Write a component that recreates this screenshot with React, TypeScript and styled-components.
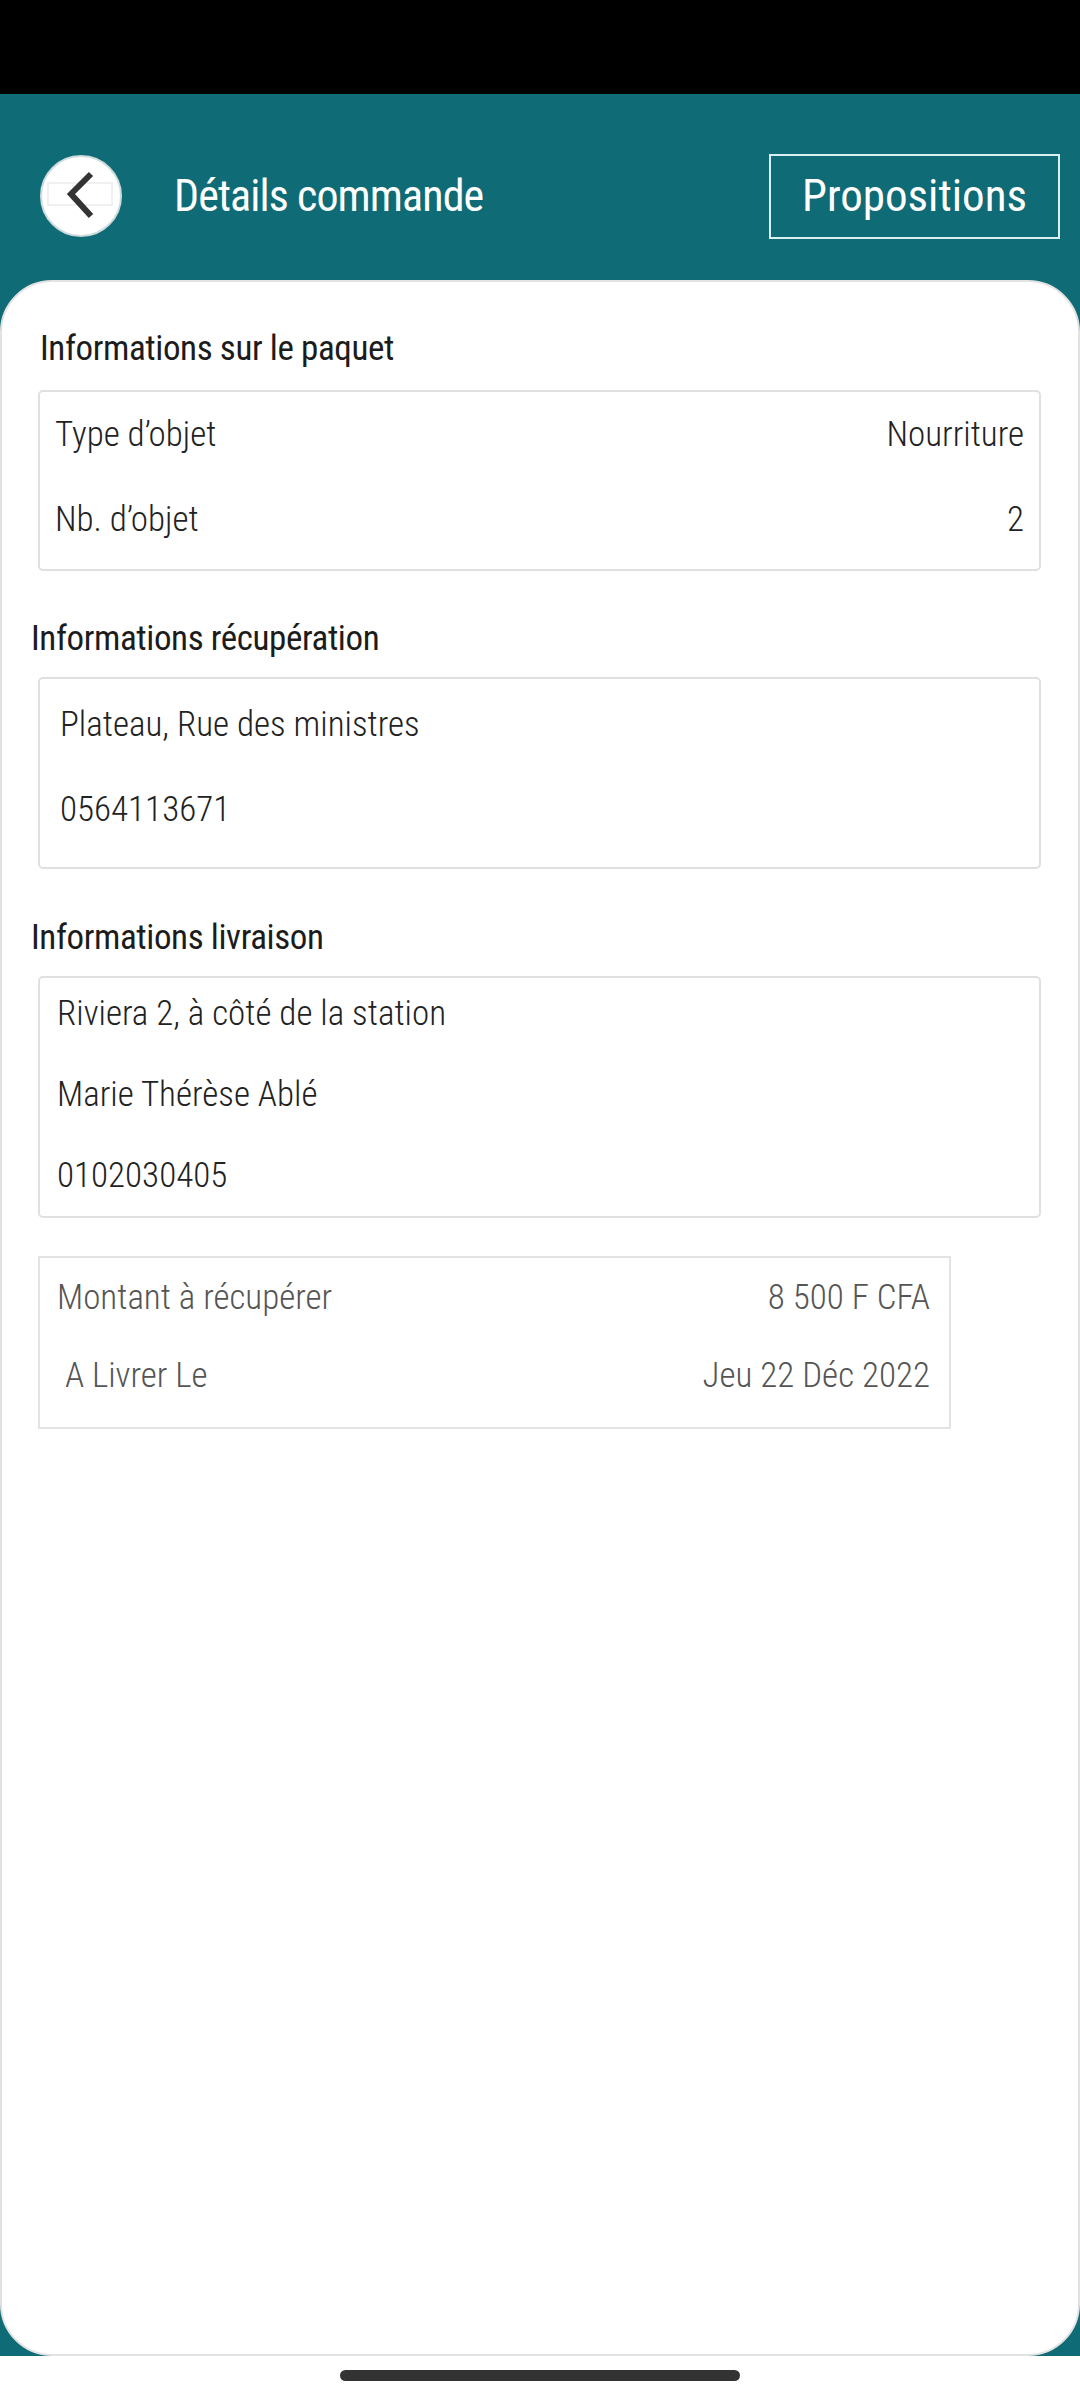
import React from "react";
import styled, { createGlobalStyle } from "styled-components";

const GlobalStyle = createGlobalStyle`
  * {
    box-sizing: border-box;
  }
  body {
    margin: 0;
    background: #ffffff;
    font-family: Roboto, "Open Sans", sans-serif;
    font-stretch: 87%;
  }
`;

const Page = styled.div`
  width: 1080px;
  height: 2400px;
  display: flex;
  flex-direction: column;
  background: #ffffff;
`;

const StatusBar = styled.div`
  height: 94px;
  background: #000000;
`;

const Screen = styled.div`
  height: 2262px;
  display: flex;
  flex-direction: column;
  background: #0f6b75;
`;

const Header = styled.header`
  height: 186px;
  padding: 18px 20px 0 40px;
  display: flex;
  align-items: center;
  justify-content: space-between;
`;

const HeaderLeft = styled.div`
  display: flex;
  align-items: center;
  gap: 52px;
`;

const BackButton = styled.button`
  width: 82px;
  height: 82px;
  padding: 0;
  border-radius: 50%;
  border: 2px solid #cfdcdd;
  background: #ffffff;
  display: flex;
  align-items: center;
  justify-content: center;
  cursor: pointer;
`;

const Title = styled.h1`
  margin: 0;
  color: #ffffff;
  font-size: 44px;
  font-weight: 400;
  font-stretch: 75%;
  letter-spacing: -0.9px;
  line-height: 54px;
`;

const OutlineButton = styled.button`
  width: 291px;
  height: 85px;
  border: 2px solid #d9f1f3;
  background: transparent;
  color: #ffffff;
  font-family: inherit;
  font-size: 45px;
  font-weight: 400;
  font-stretch: 79%;
  line-height: 54px;
  padding: 0;
  cursor: pointer;
`;

const Card = styled.main`
  flex: 1;
  background: #ffffff;
  border: 2px solid #e2e2e2;
  border-radius: 52px;
  padding: 46px 37px 0 36px;
  display: flex;
  flex-direction: column;
`;

const SectionTitle = styled.h2<{ $shift?: number; $top?: number }>`
  margin: ${({ $top }) => $top ?? 0}px 0 0 ${({ $shift }) => $shift ?? 0}px;
  color: #1c1c1c;
  font-size: 35px;
  font-weight: 400;
  font-stretch: 77%;
  letter-spacing: -0.4px;
  line-height: 42px;
`;

const Box = styled.section<{
  $pad: string;
  $gap: number;
  $top: number;
  $width?: number;
  $border?: string;
  $radius?: number;
}>`
  margin-top: ${({ $top }) => $top}px;
  width: ${({ $width }) => ($width ? `${$width}px` : "auto")};
  padding: ${({ $pad }) => $pad};
  border: 2px solid ${({ $border }) => $border ?? "#e0e0e0"};
  border-radius: ${({ $radius }) => $radius ?? 5}px;
  display: flex;
  flex-direction: column;
  gap: ${({ $gap }) => $gap}px;
`;

const Row = styled.div<{ $muted?: boolean }>`
  display: flex;
  justify-content: space-between;
  color: ${({ $muted }) => ($muted ? "#555555" : "#222222")};
  font-size: 35px;
  font-weight: 300;
  line-height: 42px;
`;

const Line = styled.div`
  color: #222222;
  font-size: 35px;
  font-weight: 300;
  line-height: 42px;
`;

const NavBar = styled.div`
  flex: 1;
  display: flex;
  justify-content: center;
  padding-top: 14px;
`;

const HomeIndicator = styled.div`
  width: 400px;
  height: 11px;
  border-radius: 6px;
  background: #333333;
`;

const ChevronLeft = () => (
  <svg width="78" height="78" viewBox="0 0 78 78" fill="none">
    <rect x="6" y="26" width="64" height="22" fill="none" stroke="#ececec" strokeWidth="1.5" />
    <path d="M49 17 L29 37 L49 59" stroke="#333333" strokeWidth="6" strokeLinecap="butt" />
  </svg>
);

export default function App() {
  return (
    <>
      <GlobalStyle />
      <Page>
        <StatusBar />
        <Screen>
          <Header>
            <HeaderLeft>
              <BackButton aria-label="Retour">
                <ChevronLeft />
              </BackButton>
              <Title>Détails commande</Title>
            </HeaderLeft>
            <OutlineButton>Propositions</OutlineButton>
          </Header>
          <Card>
            <SectionTitle $shift={2}>Informations sur le paquet</SectionTitle>
            <Box $top={20} $pad="22px 15px 28px 15px" $gap={43}>
              <Row>
                <span>Type d’objet</span>
                <span>Nourriture</span>
              </Row>
              <Row>
                <span>Nb. d’objet</span>
                <span>2</span>
              </Row>
            </Box>

            <SectionTitle $shift={-7} $top={47}>
              Informations récupération
            </SectionTitle>
            <Box $top={17} $pad="25px 20px 36px 20px" $gap={43}>
              <Line>Plateau, Rue des ministres</Line>
              <Line>0564113671</Line>
            </Box>

            <SectionTitle $shift={-7} $top={48}>
              Informations livraison
            </SectionTitle>
            <Box $top={17} $pad="15px 17px 19px 17px" $gap={39}>
              <Line>Riviera 2, à côté de la station</Line>
              <Line>Marie Thérèse Ablé</Line>
              <Line>0102030405</Line>
            </Box>

            <Box
              $top={38}
              $width={913}
              $pad="19px 19px 30px 17px"
              $gap={36}
              $border="#e3e3e3"
              $radius={0}
            >
              <Row $muted>
                <span>Montant à récupérer</span>
                <span>8 500 F CFA</span>
              </Row>
              <Row $muted>
                <span>&nbsp;A Livrer Le</span>
                <span>Jeu 22 Déc 2022</span>
              </Row>
            </Box>
          </Card>
        </Screen>
        <NavBar>
          <HomeIndicator />
        </NavBar>
      </Page>
    </>
  );
}
